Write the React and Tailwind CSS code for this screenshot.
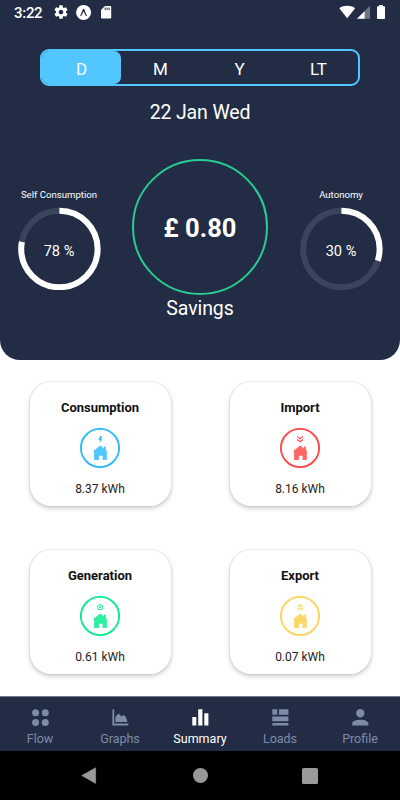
import { useState } from "react"
import clsx from "clsx"

const PERIODS = ["D", "M", "Y", "LT"]

const StatusBar = () => (
  <div className="flex h-6 items-center justify-between pl-[14px] pr-[14px] text-white">
    <div className="flex items-center">
      <span className="mt-[2px] w-[39px] text-[15px] leading-6 font-medium tracking-[-0.3px]">3:22</span>
      {/* Ajustes */}
      <svg className="ml-[1px] h-[14px] w-[14px]" viewBox="1.5 1.5 21 21" fill="currentColor">
        <path d="M19.43 12.98c.04-.32.07-.64.07-.98s-.03-.66-.07-.98l2.11-1.65c.19-.15.24-.42.12-.64l-2-3.46c-.12-.22-.39-.3-.61-.22l-2.49 1c-.52-.4-1.08-.73-1.69-.98l-.38-2.65C14.46 2.18 14.25 2 14 2h-4c-.25 0-.46.18-.49.42l-.38 2.65c-.61.25-1.17.59-1.69.98l-2.49-1c-.23-.09-.49 0-.61.22l-2 3.46c-.13.22-.07.49.12.64l2.11 1.65c-.04.32-.07.65-.07.98s.03.66.07.98l-2.11 1.65c-.19.15-.24.42-.12.64l2 3.46c.12.22.39.3.61.22l2.49-1c.52.4 1.08.73 1.69.98l.38 2.65c.03.24.24.42.49.42h4c.25 0 .46-.18.49-.42l.38-2.65c.61-.25 1.17-.59 1.69-.98l2.49 1c.23.09.49 0 .61-.22l2-3.46c.12-.22.07-.49-.12-.64l-2.11-1.65zM12 15.5c-1.93 0-3.5-1.57-3.5-3.5s1.57-3.5 3.5-3.5 3.5 1.57 3.5 3.5-1.57 3.5-3.5 3.5z" />
      </svg>
      {/* Expo */}
      <svg className="ml-[8px] h-4 w-4" viewBox="0 0 16 16">
        <circle cx="7.6" cy="8.4" r="7.5" fill="currentColor" />
        <path d="M4.2 11.6C5.6 9.7 6.3 6.4 7 5.1q.6-.6 1.2 0C8.9 6.4 9.6 9.7 11 11.6l-.7.6C9.2 11.4 8.4 8.8 7.6 7.6 6.8 8.8 6 11.4 4.9 12.2z" fill="#222d45" />
      </svg>
      {/* Tarjeta SD */}
      <svg className="ml-[9px] h-[14px] w-[11px]" viewBox="0 0 11 14">
        <path d="M4 1h5.2q1 0 1 1v10.6q0 1-1 1H1q-1 0-1-1V5z" fill="currentColor" />
        <path d="M4.2 2.6v2.5M6.1 2.6v2.5M8.1 2.6v2.5" stroke="#222d45" strokeWidth="1" />
      </svg>
    </div>
    <div className="flex items-center">
      <svg className="h-[14px] w-[17px]" viewBox="0 0 17 14">
        <path d="M8.2 13.2.3 3.2C4.7 0 11.7 0 16.1 3.2z" fill="currentColor" />
      </svg>
      <svg className="ml-[1px] h-[14px] w-[14px]" viewBox="0 0 14 14">
        <path d="M0 13.8 13 .8v13z" fill="#6c7486" />
        <path d="M0 13.8 7.6 6.2v7.6z" fill="currentColor" />
      </svg>
      <svg className="mr-[1px] ml-[6px] h-[14px] w-[8px]" viewBox="0 0 8 14">
        <path d="M2.2 0h3.6v1.3h1.4q.8 0 .8.8v11.1q0 .8-.8.8H.8q-.8 0-.8-.8V2.1q0-.8.8-.8h1.4z" fill="currentColor" />
      </svg>
    </div>
  </div>
)

const PercentRing = ({ label, value }) => (
  <div className="flex w-[118px] flex-col items-center">
    <span className="text-[9.6px] leading-[16px]">{label}</span>
    <div className="mt-[4px] grid h-[83px] w-[83px] place-items-center">
      <svg className="col-start-1 row-start-1 h-full w-full -rotate-90" viewBox="0 0 83 83" fill="none">
        <circle cx="41" cy="41.4" r="38.2" stroke="#3a455d" strokeWidth="6" />
        <circle
          cx="41"
          cy="41.4"
          r="38.2"
          stroke="white"
          strokeWidth="6"
          pathLength="100"
          strokeDasharray={`${value} 100`}
        />
      </svg>
      <span className="col-start-1 row-start-1 mt-[4px] text-[14.6px] leading-5">{value} %</span>
    </div>
  </div>
)

const BADGES = {
  bolt: <path d="M20.6 7.8 18.2 11.6l2 .3-.8 3.3 3.1-4.4-1.9-.2 1.7-2.4z" fill="currentColor" />,
  down: <path d="m17.2 8.4 3 2.3 3-2.3m-6 3.1 3 2.3 3-2.3" stroke="currentColor" strokeWidth="1.1" />,
  sun: (
    <>
      <circle cx="20.2" cy="11.3" r="2.6" stroke="currentColor" strokeWidth="1" />
      <circle cx="20.2" cy="11.3" r="1" fill="currentColor" />
    </>
  ),
  up: <path d="m17.2 11 3-2.3 3 2.3m-6 3.1 3-2.3 3 2.3" stroke="currentColor" strokeWidth="1.1" />,
}

const EnergyCard = ({ title, value, badge, ring, house }) => (
  <div className="flex h-[124.5px] w-[141px] flex-col items-center rounded-[21px] bg-white pt-[17px] text-black shadow-[0_2px_5px_rgba(0,0,0,0.22),0_0_2px_rgba(0,0,0,0.12)]">
    <h3 className="text-[13px] leading-[18px] font-bold text-[#111]">{title}</h3>
    <svg className="mt-[11px] h-10 w-10" viewBox="0 0 40 40" fill="none">
      <circle cx="20" cy="20" r="19.1" stroke={ring} strokeWidth="1.9" />
      <g style={{ color: ring }}>{BADGES[badge]}</g>
      <path d="M20.2 17.4 24 20.4v-1.8h1.8v3.3l1.8 1.6h-.8V32h-4.2v-4.2h-3.7V32h-4.8v-8.5h-1.4z" fill={house} />
    </svg>
    <span className="mt-[12px] text-[12px] leading-[18px] text-[#222]">{value} kWh</span>
  </div>
)

const TABS = [
  {
    name: "Flow",
    icon: (
      <>
        <circle cx="3.6" cy="3.7" r="3.5" />
        <circle cx="13.3" cy="3.7" r="3.5" />
        <circle cx="3.6" cy="13.4" r="3.5" />
        <circle cx="13.3" cy="13.4" r="3.5" />
      </>
    ),
  },
  {
    name: "Graphs",
    icon: <path d="M.4.4h1.8v14.1h14.2v2H.4zM3.4 13V8l3-3.6 3 3.2 2.2-1.9 2.4 2.7 1.5 4.6z" />,
  },
  {
    name: "Summary",
    icon: <path d="M.3 8h4v8.6h-4zM6.2.3h4.2v16.3H6.2zM12.3 4.3h4.1v12.3h-4.1z" />,
  },
  {
    name: "Loads",
    icon: <path d="M.3.3h5v5.4h-5zM7 .3h9.4v5.4H7zM.3 7.5h16.1v4.8H.3zM.3 14h16.1v2.4H.3z" />,
  },
  {
    name: "Profile",
    icon: <path d="M8.3.1a4.2 4.2 0 1 1 0 8.4 4.2 4.2 0 0 1 0-8.4zM.2 16.5v-2c0-2.2 4-3.7 8.1-3.7s8.1 1.5 8.1 3.7v2z" />,
  },
]

const TabBar = () => (
  <nav className="grid h-[55px] grid-cols-5 border-t border-[#6f7989] bg-[#222d45]">
    {TABS.map((tab) => (
      <button
        key={tab.name}
        className={clsx(
          "flex flex-col items-center pt-[12px]",
          tab.name === "Summary" ? "text-white" : "text-[#7d8ba9]"
        )}
      >
        <svg className="h-[17px] w-[17px] shrink-0" viewBox="0 0 17 17" fill="currentColor">
          {tab.icon}
        </svg>
        <span className="mt-[4px] text-[12.5px] leading-[17px]">{tab.name}</span>
      </button>
    ))}
  </nav>
)

const SystemNav = () => (
  <div className="flex h-[49px] items-center justify-between bg-black px-[81px] text-[#999]">
    <svg className="h-[17px] w-4" viewBox="0 0 16 17" fill="currentColor">
      <path d="M14.6.8v15.6L.8 8.6z" stroke="currentColor" strokeWidth=".6" strokeLinejoin="round" />
    </svg>
    <div className="ml-[1px] h-[15px] w-[15px] rounded-full bg-[#999]" />
    <div className="mt-[1px] mr-[1px] h-4 w-4 rounded-[1.5px] bg-[#999]" />
  </div>
)

const App = () => {
  const [period, setPeriod] = useState("D")

  return (
    <div className="flex h-[800px] w-[400px] flex-col overflow-hidden bg-white font-['Roboto',sans-serif]">
      <header className="h-[360px] shrink-0 rounded-b-[20px] bg-[#222d45] text-white">
        <StatusBar />

        <div className="mx-10 mt-[25px] grid h-[37px] grid-cols-4 rounded-[9px] border-2 border-[#52c7ff]">
          {PERIODS.map((p) => (
            <button
              key={p}
              onClick={() => setPeriod(p)}
              className={clsx(
                "rounded-[7px] pt-[3px] text-[17px] leading-6",
                p === period && "bg-[#52c7ff]"
              )}
            >
              {p}
            </button>
          ))}
        </div>
        <p className="mt-[13px] text-center text-[19.5px] leading-7 tracking-[-0.15px]">22 Jan Wed</p>

        <div className="flex justify-between">
          <div className="pt-[60px]">
            <PercentRing label="Self Consumption" value={78} />
          </div>
          <div className="flex flex-col items-center pt-[32px]">
            <div className="flex h-[136px] w-[136px] items-center justify-center rounded-full border-[2.5px] border-[#2acb93] text-[25.5px] font-bold">
              <span className="mt-[2px]">£ 0.80</span>
            </div>
            <span className="text-[19.5px] leading-7 tracking-[-0.1px]">Savings</span>
          </div>
          <div className="pt-[60px]">
            <PercentRing label="Autonomy" value={30} />
          </div>
        </div>
      </header>

      <main className="grid grow grid-cols-2 content-start justify-items-center gap-y-[43.5px] pt-[21.5px]">
        <EnergyCard title="Consumption" value="8.37" badge="bolt" ring="#2fbcfb" house="#52c7ff" />
        <EnergyCard title="Import" value="8.16" badge="down" ring="#fc4b4b" house="#ff6767" />
        <EnergyCard title="Generation" value="0.61" badge="sun" ring="#0eea90" house="#2cefa0" />
        <EnergyCard title="Export" value="0.07" badge="up" ring="#ffd35c" house="#ffd668" />
      </main>

      <TabBar />
      <SystemNav />
    </div>
  )
}

export default App
